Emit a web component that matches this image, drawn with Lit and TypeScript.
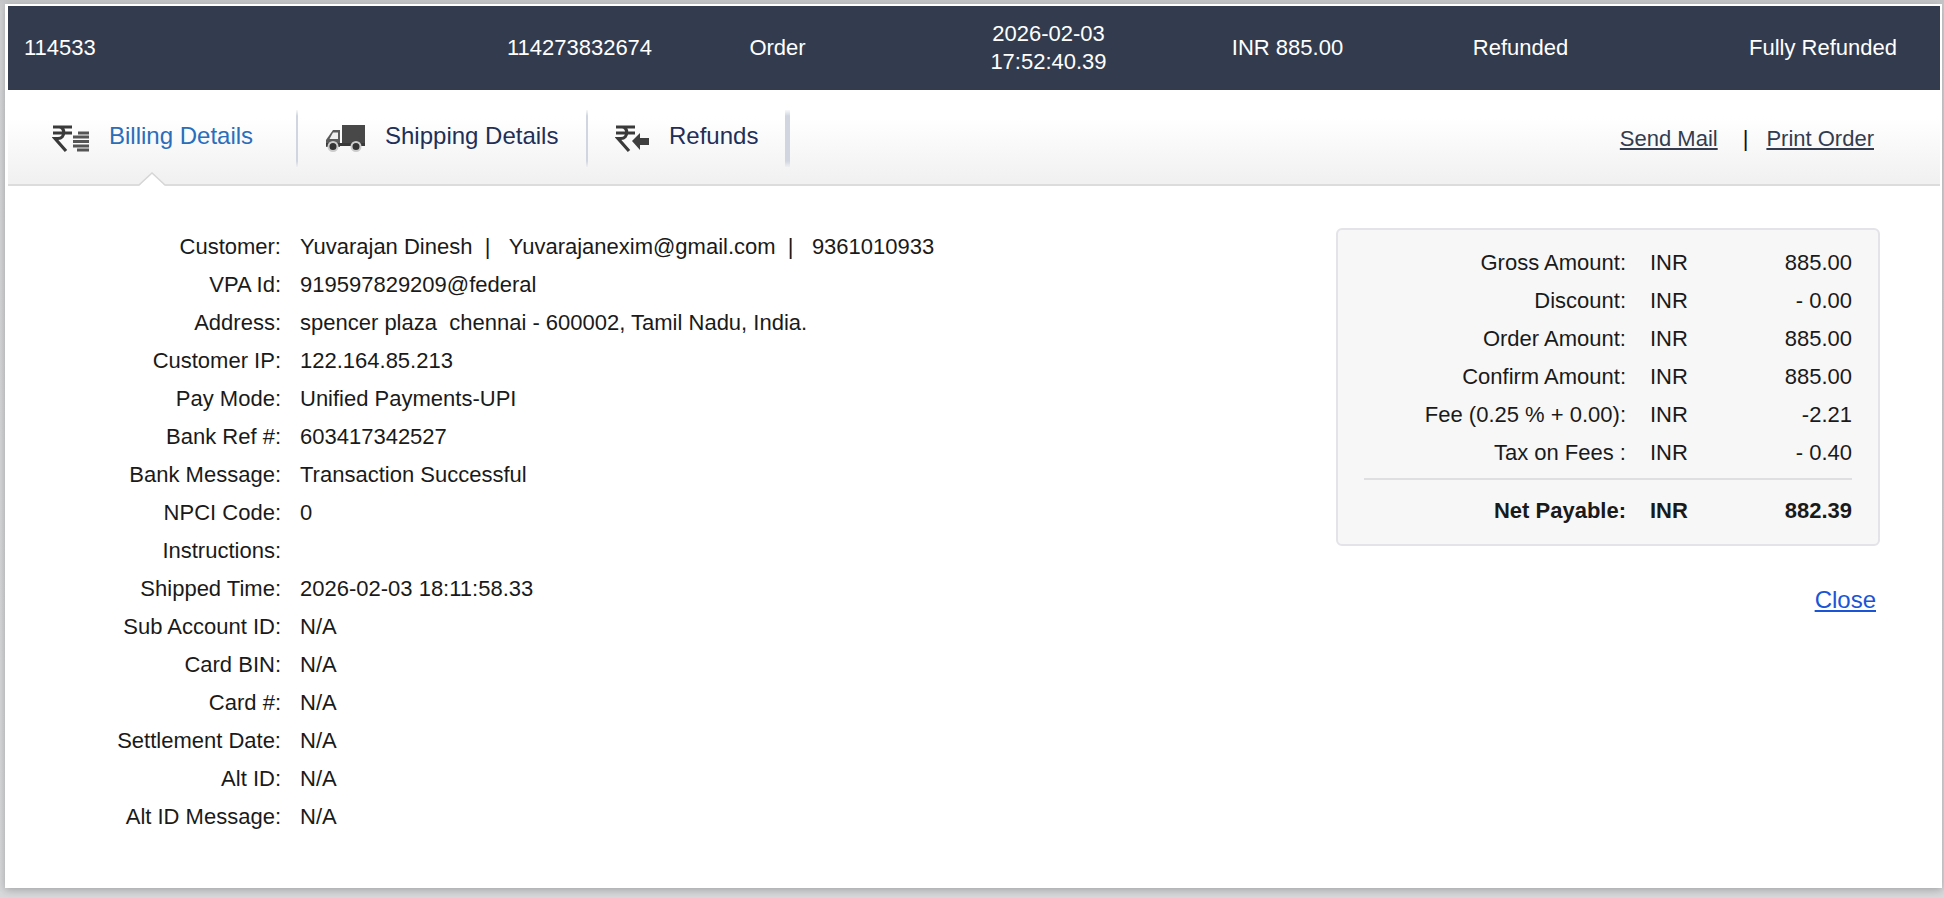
import { LitElement, html, css, svg } from "lit";
import { customElement } from "lit/decorators.js";

const rupee = svg`<path d="M1 2h19M1 8h19M3 2h4c6.500 0 6.500 11.500-1 11.500H3L14 26" fill="none" stroke="#3a3a3a" stroke-width="3.200"/>`;

const billingIcon = html`<svg class="icon" width="38" height="28" viewBox="0 0 38 28">
  ${rupee}
  <path d="M26 8h11M21 12h16M21 16.500h16M21 21h16M25 25h12" stroke="#555" stroke-width="2.800" fill="none"/>
</svg>`;

const truckIcon = html`<svg class="icon" width="42" height="28" viewBox="0 0 42 28">
  <rect x="17" y="0" width="23" height="21" fill="#484848"/>
  <path d="M15 5H8L1 15v7h14z" fill="#5a5a5a"/>
  <path d="M8 7.500h5v6.500H4.500z" fill="#eee"/>
  <rect x="1" y="18" width="39" height="3" fill="#3a3a3a"/>
  <circle cx="8" cy="21.500" r="4.500" fill="#333" stroke="#ccc" stroke-width="2"/>
  <circle cx="31" cy="21.500" r="4.500" fill="#333" stroke="#ccc" stroke-width="2"/>
</svg>`;

const refundIcon = html`<svg class="icon" width="34" height="28" viewBox="0 0 34 28">
  ${rupee}
  <path d="M17 16 25 8v5h9v7h-9v5z" fill="#3f3f3f"/>
</svg>`;

const details: [string, string][] = [
  ["Customer:", "Yuvarajan Dinesh\u00a0 |\u00a0 \u00a0Yuvarajanexim@gmail.com\u00a0 |\u00a0 \u00a09361010933"],
  ["VPA Id:", "919597829209@federal"],
  ["Address:", "spencer plaza\u00a0 chennai - 600002, Tamil Nadu, India."],
  ["Customer IP:", "122.164.85.213"],
  ["Pay Mode:", "Unified Payments-UPI"],
  ["Bank Ref #:", "603417342527"],
  ["Bank Message:", "Transaction Successful"],
  ["NPCI Code:", "0"],
  ["Instructions:", ""],
  ["Shipped Time:", "2026-02-03 18:11:58.33"],
  ["Sub Account ID:", "N/A"],
  ["Card BIN:", "N/A"],
  ["Card #:", "N/A"],
  ["Settlement Date:", "N/A"],
  ["Alt ID:", "N/A"],
  ["Alt ID Message:", "N/A"],
];

const amounts: [string, string][] = [
  ["Gross Amount:", "885.00"],
  ["Discount:", "- 0.00"],
  ["Order Amount:", "885.00"],
  ["Confirm Amount:", "885.00"],
  ["Fee (0.25 % + 0.00):", "-2.21"],
  ["Tax on Fees :", "- 0.40"],
];

@customElement("app-root")
export class AppRoot extends LitElement {
  static styles = css`
    :host {
      display: block;
      height: 898px;
      box-sizing: border-box;
      padding: 4px 2px 10px 5px;
      background: linear-gradient(#c4c5c7, #d4d5d7 12px, #d8d9db);
      font-family: "Liberation Sans", Arial, sans-serif;
      font-size: 22px;
      color: #1a1a1a;
      overflow: hidden;
    }
    .panel {
      height: 100%;
      box-sizing: border-box;
      padding: 2px 2px 0 3px;
      background: #fff;
      display: flex;
      flex-direction: column;
      box-shadow: 0 2px 8px rgba(0, 0, 0, 0.25);
    }
    .head {
      flex: none;
      height: 84px;
      background: #333c4e;
      color: #fff;
      display: grid;
      grid-template-columns: 479px 185px 211px 331px 147px 319px 1fr;
      align-items: center;
      line-height: 28px;
    }
    .head > div { text-align: center; }
    .head > .first { text-align: left; padding-left: 16px; }
    .head > .last { text-align: right; padding-right: 43px; }
    .tabs {
      flex: none;
      height: 96px;
      box-sizing: border-box;
      display: flex;
      align-items: flex-start;
      position: relative;
      border-bottom: 2px solid #dcdcdc;
      background: linear-gradient(#fff 28px, #f1f1f2 90px);
    }
    .tab {
      height: 57px;
      margin-top: 20px;
      box-sizing: border-box;
      display: flex;
      align-items: center;
      font-size: 24px;
      color: #1f2f57;
      border-right: 2px solid #d3d7e0;
      border-image: linear-gradient(transparent, #d0d5df 12%, #d0d5df 88%, transparent) 1;
      padding-bottom: 6px;
    }
    .tab.t1 { width: 290px; padding-left: 44px; gap: 19px; color: #2a6ebb; }
    .tab.t2 { width: 290px; padding-left: 27px; gap: 18px; }
    .tab.t3 { width: 202px; padding-left: 27px; gap: 20px; border-right-width: 5px; }
    .icon { flex: none; margin-top: 7px; filter: blur(0.6px); }
    .links {
      margin-left: auto;
      margin-top: 35px;
      padding-right: 66px;
      display: flex;
      gap: 18px;
      color: #111;
      line-height: 28px;
    }
    .links span { margin-left: 7px; }
    .links a { color: #333c4e; text-decoration: underline; }
    .caret {
      position: absolute;
      left: 131px;
      bottom: -2px;
      width: 26px;
      height: 14px;
      display: block;
    }
    .body {
      flex: 1;
      display: flex;
      justify-content: space-between;
      align-items: flex-start;
      padding: 42px 60px 0 0;
    }
    .rows {
      display: grid;
      grid-template-columns: 273px auto;
      column-gap: 19px;
      grid-auto-rows: 38px;
      line-height: 38px;
    }
    .rows .label { text-align: right; }
    .rows .value { white-space: pre; }
    .side {
      width: 544px;
      display: flex;
      flex-direction: column;
      align-items: flex-end;
    }
    .box {
      width: 100%;
      box-sizing: border-box;
      background: #f7f7f8;
      border: 2px solid #e3e3e8;
      border-radius: 6px;
      padding: 14px 26px 14px 26px;
      line-height: 38px;
    }
    .amt {
      display: grid;
      grid-template-columns: 1fr 80px 122px;
    }
    .amt .l { text-align: right; padding-right: 24px; }
    .amt .v { text-align: right; }
    .amt.net { font-weight: 700; border-top: 2px solid #dfdfe2; margin-top: 6px; padding-top: 12px; }
    .close {
      margin-top: 35px;
      font-size: 24px;
      color: #1a55d6;
      text-decoration: underline;
      line-height: 38px;
      margin-right: 4px;
    }
  `;

  render() {
    return html`<div class="panel">
      <div class="head">
        <div class="first">114533</div>
        <div>114273832674</div>
        <div>Order</div>
        <div>2026-02-03<br />17:52:40.39</div>
        <div>INR 885.00</div>
        <div>Refunded</div>
        <div class="last">Fully Refunded</div>
      </div>
      <div class="tabs">
        <div class="tab t1">${billingIcon}<span>Billing Details</span></div>
        <div class="tab t2">${truckIcon}<span>Shipping Details</span></div>
        <div class="tab t3">${refundIcon}<span>Refunds</span></div>
        <div class="links">
          <a href="#">Send Mail</a><span>|</span><a href="#">Print Order</a>
        </div>
        <svg class="caret" viewBox="0 0 26 14">
          <path d="M0 14 13 1l13 13z" fill="#fff"/>
          <path d="M0 13 13 1l13 12" fill="none" stroke="#d6d6d6" stroke-width="1.500"/>
        </svg>
      </div>
      <div class="body">
        <div class="rows">
          ${details.map(
            ([l, v]) => html`<div class="label">${l}</div><div class="value">${v}</div>`
          )}
        </div>
        <div class="side">
          <div class="box">
            ${amounts.map(
              ([l, v]) => html`<div class="amt"><div class="l">${l}</div><div class="c">INR</div><div class="v">${v}</div></div>`
            )}
            <div class="amt net"><div class="l">Net Payable:</div><div class="c">INR</div><div class="v">882.39</div></div>
          </div>
          <a class="close" href="#">Close</a>
        </div>
      </div>
    </div>`;
  }
}
